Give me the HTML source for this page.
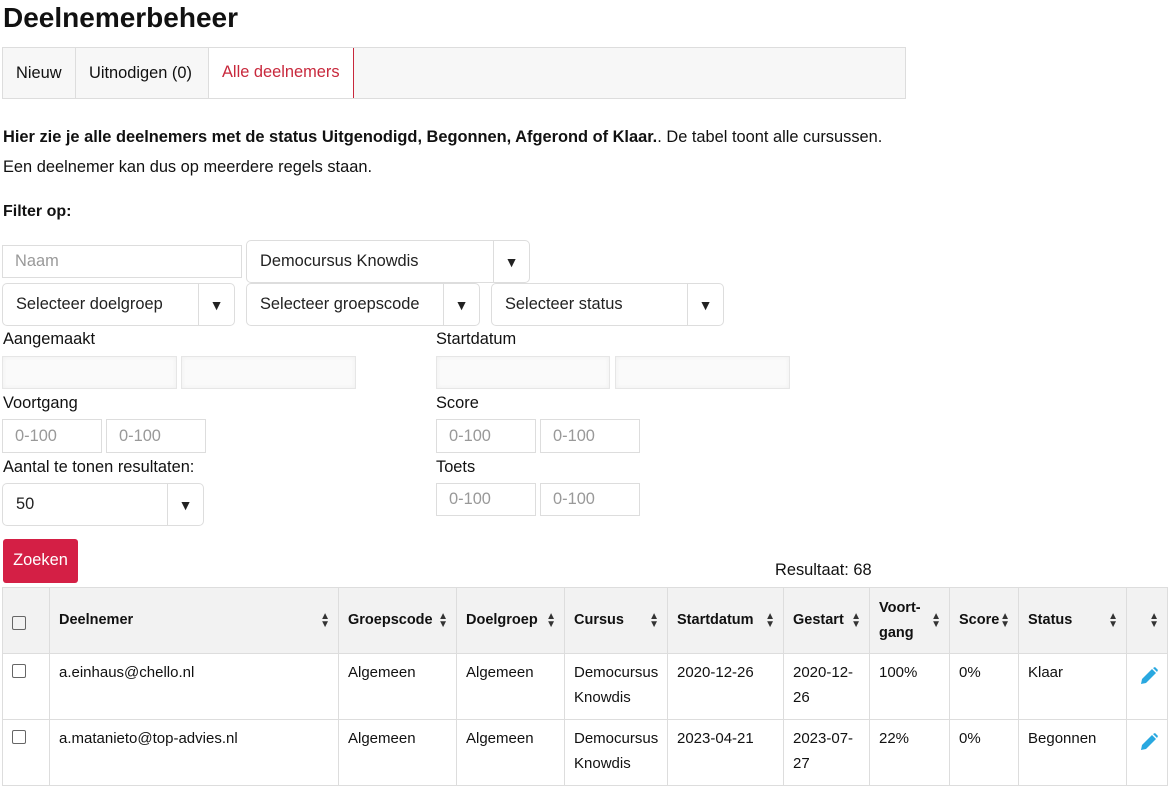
<!DOCTYPE html>
<html><head><meta charset="utf-8"><style>
*{box-sizing:border-box;margin:0;padding:0}
body{width:1172px;height:782px;overflow:hidden;background:#fff;font-family:"Liberation Sans",sans-serif;font-size:16.4px;color:#111;position:relative}
.a{position:absolute;white-space:nowrap}
h1{position:absolute;left:3px;top:2px;font-family:"Liberation Sans",sans-serif;font-size:28px;font-weight:bold;color:#111}
.box{position:absolute;border:1px solid #ddd;background:#fff}
.in{position:absolute;border:1px solid #ddd;color:#999;padding-left:12px;display:flex;align-items:center}
.sel{position:absolute;border:1px solid #ddd;border-radius:5px;background:#fff;display:flex;align-items:center;padding-left:13px;color:#222}
.sel .ar{position:absolute;right:0;top:0;bottom:0;width:36px;border-left:1px solid #ddd;display:flex;align-items:center;justify-content:center;font-size:14px}
.dt{position:absolute;border:1px solid #e6e6e6;background:#fafafa;box-shadow:inset 0 0 4px #eee}
table{position:absolute;left:2px;top:587px;border-collapse:collapse;width:1165px;table-layout:fixed}
td,th{border:1px solid #ddd;text-align:left;vertical-align:top;padding:0 9px;line-height:25px;font-size:15px}
th{background:#f2f2f2;height:66px;vertical-align:middle;font-weight:bold;position:relative;font-size:14.5px}
td{height:66px;padding-top:6px}
th .s{position:absolute;right:8px;top:50%;margin-top:-8px;font-size:10px;line-height:8px;color:#333}
.cb{width:14px;height:14px;border:1px solid #666;border-radius:2px;display:inline-block;margin-top:4px}
</style></head><body>
<h1>Deelnemerbeheer</h1>
<div class="box" style="left:2px;top:47px;width:904px;height:52px;background:#f7f7f7"></div>
<div class="a" style="left:2px;top:47px;width:74px;height:52px;border:1px solid #ddd;line-height:50px;padding-left:13px;background:#f7f7f7">Nieuw</div>
<div class="a" style="left:75px;top:47px;width:134px;height:52px;border:1px solid #ddd;line-height:50px;padding-left:13px;background:#f7f7f7">Uitnodigen (0)</div>
<div class="a" style="left:209px;top:48px;width:145px;height:50px;background:#fff;line-height:48px;padding-left:13px;color:#c8283c;border-right:1px solid #c8283c">Alle deelnemers</div>
<div class="a" style="left:3px;top:128px"><b>Hier zie je alle deelnemers met de status Uitgenodigd, Begonnen, Afgerond of Klaar.</b>. De tabel toont alle cursussen.</div>
<div class="a" style="left:3px;top:158px">Een deelnemer kan dus op meerdere regels staan.</div>
<div class="a" style="left:3px;top:203px;font-weight:bold;font-size:16px">Filter op:</div>
<div class="in" style="left:2px;top:245px;width:240px;height:33px">Naam</div>
<div class="sel" style="left:246px;top:240px;width:284px;height:43px">Democursus Knowdis<span class="ar">▼</span></div>
<div class="sel" style="left:2px;top:283px;width:233px;height:43px">Selecteer doelgroep<span class="ar">▼</span></div>
<div class="sel" style="left:246px;top:283px;width:234px;height:43px">Selecteer groepscode<span class="ar">▼</span></div>
<div class="sel" style="left:491px;top:283px;width:233px;height:43px">Selecteer status<span class="ar">▼</span></div>
<div class="a" style="left:3px;top:330px">Aangemaakt</div>
<div class="a" style="left:436px;top:330px">Startdatum</div>
<div class="dt" style="left:2px;top:356px;width:175px;height:33px"></div>
<div class="dt" style="left:181px;top:356px;width:175px;height:33px"></div>
<div class="dt" style="left:436px;top:356px;width:174px;height:33px"></div>
<div class="dt" style="left:615px;top:356px;width:175px;height:33px"></div>
<div class="a" style="left:3px;top:394px">Voortgang</div>
<div class="a" style="left:436px;top:394px">Score</div>
<div class="in" style="left:2px;top:419px;width:100px;height:34px">0-100</div>
<div class="in" style="left:106px;top:419px;width:100px;height:34px">0-100</div>
<div class="in" style="left:436px;top:419px;width:100px;height:34px">0-100</div>
<div class="in" style="left:540px;top:419px;width:100px;height:34px">0-100</div>
<div class="a" style="left:3px;top:458px">Aantal te tonen resultaten:</div>
<div class="a" style="left:436px;top:458px">Toets</div>
<div class="sel" style="left:2px;top:483px;width:202px;height:43px">50<span class="ar">▼</span></div>
<div class="in" style="left:436px;top:483px;width:100px;height:33px">0-100</div>
<div class="in" style="left:540px;top:483px;width:100px;height:33px">0-100</div>
<div class="a" style="left:3px;top:539px;width:75px;height:44px;background:#d41f45;border-radius:3px;color:#fff;line-height:42px;text-align:center">Zoeken</div>
<div class="a" style="left:775px;top:561px">Resultaat: 68</div>
<table>
<colgroup><col style="width:47px"><col style="width:289px"><col style="width:118px"><col style="width:108px"><col style="width:103px"><col style="width:116px"><col style="width:86px"><col style="width:80px"><col style="width:69px"><col style="width:108px"><col style="width:41px"></colgroup>
<tr><th><span class="cb" style="margin-top:14px"></span></th><th>Deelnemer<span class="s">▲<br>▼</span></th><th>Groepscode<span class="s">▲<br>▼</span></th><th>Doelgroep<span class="s">▲<br>▼</span></th><th>Cursus<span class="s">▲<br>▼</span></th><th>Startdatum<span class="s">▲<br>▼</span></th><th>Gestart<span class="s">▲<br>▼</span></th><th>Voort-<br>gang<span class="s">▲<br>▼</span></th><th>Score<span class="s">▲<br>▼</span></th><th>Status<span class="s">▲<br>▼</span></th><th><span class="s">▲<br>▼</span></th></tr>
<tr><td><span class="cb"></span></td><td>a.einhaus@chello.nl</td><td>Algemeen</td><td>Algemeen</td><td>Democursus Knowdis</td><td>2020-12-26</td><td>2020-12-<br>26</td><td>100%</td><td>0%</td><td>Klaar</td><td><svg width="20" height="20" viewBox="0 0 20 20" style="margin:6px 0 0 3px"><path d="M2 18l1-5 10-10 4 4-10 10z M14 2l2-1 3 3-1 2z" fill="#29a8e0"/></svg></td></tr>
<tr><td><span class="cb"></span></td><td>a.matanieto@top-advies.nl</td><td>Algemeen</td><td>Algemeen</td><td>Democursus Knowdis</td><td>2023-04-21</td><td>2023-07-<br>27</td><td>22%</td><td>0%</td><td>Begonnen</td><td><svg width="20" height="20" viewBox="0 0 20 20" style="margin:6px 0 0 3px"><path d="M2 18l1-5 10-10 4 4-10 10z M14 2l2-1 3 3-1 2z" fill="#29a8e0"/></svg></td></tr>
</table>
</body></html>
